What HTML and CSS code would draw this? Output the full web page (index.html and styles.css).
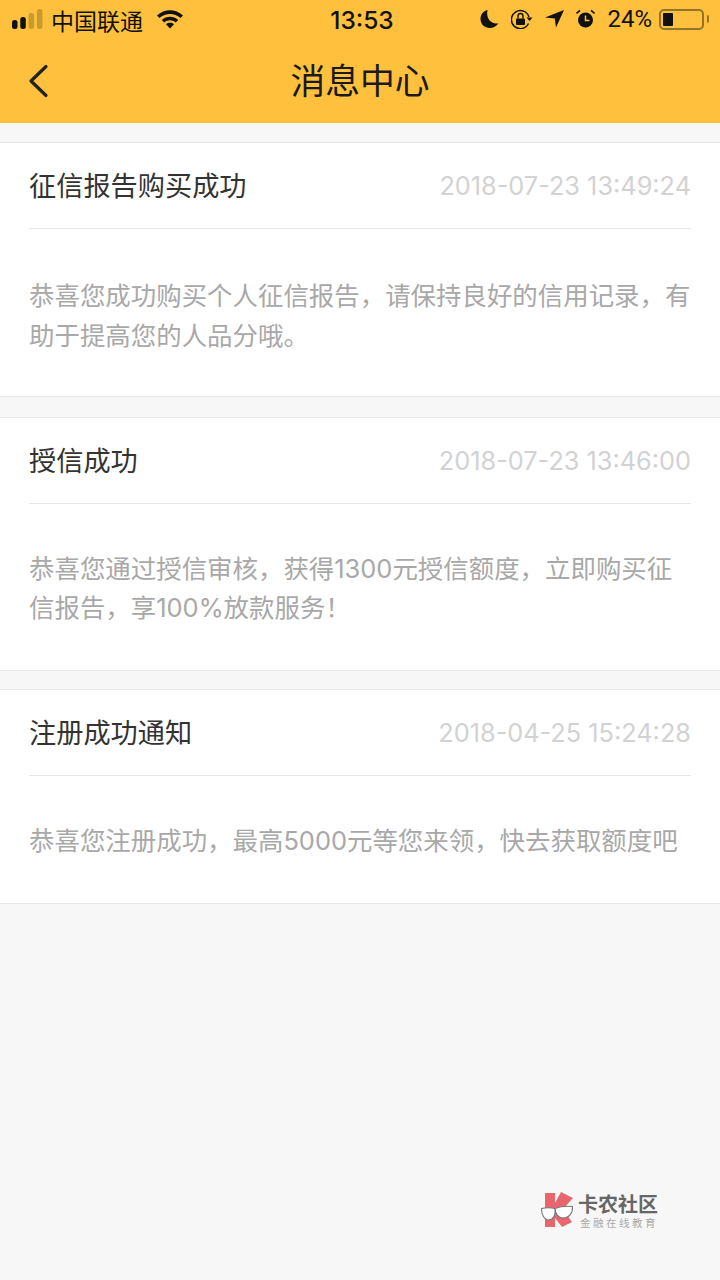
FILE: index.html
```html
<!DOCTYPE html>
<html lang="zh-CN">
<head>
    <meta charset="UTF-8">
    <meta name="viewport" content="width=device-width, initial-scale=1.0">
    <title>消息中心</title>
    <link rel="stylesheet" href="styles.css">
</head>
<body>
    <header class="top">
        <div class="status">
            <div class="status-left">
                <svg class="signal" width="31" height="20" viewBox="0 0 31 20">
                    <rect x="0" y="11" width="5.500" height="9" rx="2.500" fill="#111"/>
                    <rect x="8.300" y="8" width="5.500" height="12" rx="2.500" fill="#111"/>
                    <rect x="16.600" y="4" width="5.500" height="16" rx="2.500" fill="#c99a2c"/>
                    <rect x="24.900" y="0" width="5.500" height="20" rx="2.500" fill="#c99a2c"/>
                </svg>
                <span class="carrier">中国联通</span>
                <svg class="wifi" width="28" height="20" viewBox="0 0 28 20">
                    <path d="M1 6.500C8.500 -0.500 19.500 -0.500 27 6.500L24.500 9C18.500 3.500 9.500 3.500 3.500 9Z" fill="#111"/>
                    <path d="M5.800 11C10.500 6.800 17.500 6.800 22.200 11L19.800 13.400C16.300 10.400 11.700 10.400 8.200 13.400Z" fill="#111"/>
                    <path d="M10 15.200C12.300 13.400 15.700 13.400 18 15.200L14 19.500Z" fill="#111"/>
                </svg>
            </div>
            <div class="clock">13:53</div>
            <div class="status-right">
                <svg width="19" height="20" viewBox="0 0 19 20">
                    <path d="M7.500 1C3 2.200 0.500 5.800 0.500 10C0.500 15.200 4.700 19 9.800 19C13.300 19 16.500 17.200 18.500 14.200C12.500 15.800 5.500 10.500 7.500 1Z" fill="#111"/>
                </svg>
                <svg width="22" height="20" viewBox="0 0 22 20">
                    <path d="M17.500 14.500A9 9 0 1 1 18 8" fill="none" stroke="#111" stroke-width="1.500"/>
                    <path d="M15.500 8.500H21.500L18.500 12Z" fill="#111"/>
                    <rect x="5" y="9.500" width="9" height="6.500" rx="1" fill="#111"/>
                    <path d="M7 9.500V7A2.500 2.500 0 0 1 12 7V9.500" fill="none" stroke="#111" stroke-width="1.400"/>
                </svg>
                <svg width="19" height="20" viewBox="0 0 19 20">
                    <path d="M0 8.500L19 1L11 18.500L9.800 9.500Z" fill="#111"/>
                </svg>
                <svg width="19" height="20" viewBox="0 0 19 20">
                    <circle cx="9.500" cy="11" r="7.500" fill="#111"/>
                    <path d="M9.500 6.500V11.500H13.500" fill="none" stroke="#ffc03d" stroke-width="1.500"/>
                    <path d="M0.500 4.500L4 1.300M18.500 4.500L15 1.300" stroke="#111" stroke-width="1.600"/>
                </svg>
                <span class="percent">24%</span>
                <div class="battery"><div class="battery-level"></div></div>
                <div class="battery-tip"></div>
            </div>
        </div>
        <div class="nav">
            <svg class="back" width="22" height="34" viewBox="0 0 22 34">
                <path d="M19 2.500L4 17L19 31.500" fill="none" stroke="#222" stroke-width="3.200" stroke-linecap="round" stroke-linejoin="round"/>
            </svg>
            <h1 class="nav-title">消息中心</h1>
        </div>
    </header>

    <main class="list">
        <section class="msg msg-first">
            <div class="msg-head">
                <span class="msg-title">征信报告购买成功</span>
                <span class="msg-time">2018-07-23 13:49:24</span>
            </div>
            <p class="msg-body">恭喜您成功购买个人征信报告，请保持良好的信用记录，有助于提高您的人品分哦。</p>
        </section>
        <section class="msg">
            <div class="msg-head">
                <span class="msg-title">授信成功</span>
                <span class="msg-time">2018-07-23 13:46:00</span>
            </div>
            <p class="msg-body">恭喜您通过授信审核，获得1300元授信额度，立即购买征信报告，享100%放款服务！</p>
        </section>
        <section class="msg">
            <div class="msg-head">
                <span class="msg-title">注册成功通知</span>
                <span class="msg-time">2018-04-25 15:24:28</span>
            </div>
            <p class="msg-body">恭喜您注册成功，最高5000元等您来领，快去获取额度吧</p>
        </section>
    </main>

    <div class="mark">
        <svg class="mark-logo" width="36" height="38" viewBox="0 0 36 38">
            <path d="M5 1H15V11L21 0L33 6L23 17L32 30L22 35L15 26V35H5Z" fill="#e9666f"/>
            <path d="M1.500 16.500C6 15.500 11 15.500 15 16.500C16 23 13 28 8.500 28C4 28 1.500 22 1.500 16.500Z" fill="#fff" stroke="#777" stroke-width="1.100"/>
            <path d="M15 16.500C20 14.500 27 14 32.500 14.500C33 21 29 26 23.500 26C18.500 26 15.500 22 15 16.500Z" fill="#fff" stroke="#777" stroke-width="1.100"/>
        </svg>
        <div class="mark-text">
            <div class="mark-name">卡农社区</div>
            <div class="mark-sub">金融在线教育</div>
        </div>
    </div>
</body>
</html>
```

FILE: styles.css
```css
body {
    margin: 0;
    height: 1280px;
    overflow: hidden;
    position: relative;
    background-color: #f7f7f7;
    font-family: "Noto Sans CJK SC", "Liberation Sans", sans-serif;
}
.top {
    background: #ffc03d;
    height: 123px;
}
.status {
    height: 40px;
    display: flex;
    align-items: center;
    justify-content: space-between;
    padding: 0 11px 0 12px;
    color: #111;
}
.status-left {
    width: 260px;
    display: flex;
    align-items: center;
}
.signal {
    margin-top: -2px;
}
.carrier {
    font-size: 23px;
    margin-left: 8px;
}
.wifi {
    margin-left: 13px;
    margin-top: -2px;
}
.clock {
    font-family: "Inter", sans-serif;
    font-size: 24.500px;
    font-weight: 500;
    margin-left: 3px;
}
.status-right {
    width: 260px;
    display: flex;
    align-items: center;
    justify-content: flex-end;
    gap: 12px;
    margin-top: -2px;
}
.percent {
    font-family: "Roboto", sans-serif;
    font-size: 24px;
}
.battery {
    width: 37px;
    height: 13px;
    border: 2px solid #94742a;
    border-radius: 5px;
    padding: 2px;
    margin-left: -5px;
}
.battery-level {
    width: 10px;
    height: 100%;
    background: #111;
    border-radius: 1px;
}
.battery-tip {
    width: 2px;
    height: 8px;
    background: #94742a;
    border-radius: 0 2px 2px 0;
    margin-left: -9px;
}
.nav {
    height: 83px;
    position: relative;
    display: flex;
    align-items: center;
    justify-content: center;
}
.back {
    position: absolute;
    left: 27px;
    top: 24px;
}
.nav-title {
    margin: 0 0 6px;
    font-size: 34.800px;
    font-weight: 400;
    color: #1a1a1a;
}
.list {
    padding-top: 19px;
}
.msg {
    background: #fff;
    border-top: 1px solid #e6e6e6;
    border-bottom: 1px solid #e6e6e6;
    padding: 0 29px 43px;
    margin-bottom: 18px;
}
.msg-first {
    padding-bottom: 40px;
    margin-bottom: 20px;
}
.msg-head {
    height: 86px;
    padding-bottom: 3px;
    box-sizing: border-box;
    display: flex;
    align-items: center;
    justify-content: space-between;
    border-bottom: 1px solid #e6e6e6;
    margin-bottom: 1px;
}
.msg-title {
    font-size: 27.200px;
    color: #333;
}
.msg-time {
    font-family: "Inter", sans-serif;
    font-size: 25.300px;
    margin-top: 2px;
    color: #d2d2d2;
}
.msg-body {
    margin: 45px 0 0;
    font-family: "Inter", "Noto Sans CJK SC", sans-serif;
    font-size: 25.450px;
    line-height: 39px;
    color: #a8a8a8;
}
.msg-first .msg-body {
    margin-top: 47px;
    line-height: 40px;
}
.mark {
    position: absolute;
    left: 540px;
    top: 1192px;
    display: flex;
    align-items: center;
    gap: 2px;
}
.mark-name {
    font-size: 20px;
    line-height: 24px;
    font-weight: 700;
    color: #666;
}
.mark-sub {
    font-size: 10.500px;
    line-height: 14px;
    letter-spacing: 2.500px;
    margin-left: 2px;
    color: #aaa;
}
```
